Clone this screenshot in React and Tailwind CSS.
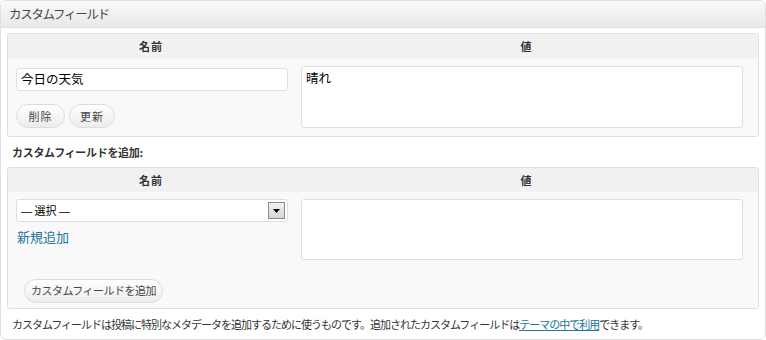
import React from 'react';

const jp = { fontFamily: '"Noto Sans CJK JP", "Liberation Sans", sans-serif' };

function Pill({ children, className = '' }) {
  return (
    <button
      className={`h-[24px] rounded-[12px] border border-[#dcdcdc] bg-gradient-to-b from-white to-[#ececec] text-[11px] tracking-[-0.5px] text-[#464646] leading-none ${className}`}
    >
      {children}
    </button>
  );
}

function HeadRow() {
  return (
    <div className="flex h-[24px] items-center bg-[#f1f1f1] text-[11px] font-bold text-[#333]">
      <div className="w-[286px] text-center tracking-[1px]">名前</div>
      <div className="flex-1 text-center">値</div>
    </div>
  );
}

export default function App() {
  return (
    <div className="w-[766px] h-[340px] bg-white" style={jp}>
      <div className="h-[340px] rounded-[6px] border border-[#dfdfdf] overflow-hidden">
        <div className="h-[27px] border-b border-[#dfdfdf] bg-gradient-to-b from-[#f9f9f9] to-[#e9e9e9] flex items-center pl-[8px] text-[12.5px] tracking-[-1.3px] text-[#464646]">
          カスタムフィールド
        </div>

        <div className="px-[6px] pt-[5px]">
          {/* existing field */}
          <div className="h-[104px] rounded-[3px] border border-[#dfdfdf] overflow-hidden">
            <HeadRow />
            <div className="flex h-[78px] bg-[#f9f9f9]">
              <div className="w-[286px] pl-[8px] pr-[6px] pt-[10px]">
                <div className="h-[23px] rounded-[3px] border border-[#dfdfdf] bg-white flex items-center pl-[4px] text-[12.5px] text-black">
                  今日の天気
                </div>
                <div className="mt-[13px] flex gap-[4px]">
                  <Pill className="w-[49px] tracking-[1px]">削除</Pill>
                  <Pill className="w-[46px] tracking-[1px]">更新</Pill>
                </div>
              </div>
              <div className="flex-1 pl-[7px] pr-[15px] pt-[8px]">
                <div className="h-[62px] rounded-[3px] border border-[#dfdfdf] bg-white px-[4px] pt-[2px] text-[12.5px] text-black">
                  晴れ
                </div>
              </div>
            </div>
          </div>

          <div className="h-[30px] flex items-center pl-[5px] text-[11px] font-bold tracking-[-0.3px] text-[#333]">
            カスタムフィールドを追加:
          </div>

          {/* new field */}
          <div className="h-[142px] rounded-[3px] border border-[#dfdfdf] overflow-hidden">
            <HeadRow />
            <div className="flex h-[116px] bg-[#f9f9f9]">
              <div className="w-[286px] pl-[8px] pr-[6px] pt-[7px]">
                <div className="h-[23px] rounded-[3px] border border-[#dfdfdf] bg-white flex items-center justify-between pl-[4px] pr-[2px] text-[11px] text-black">
                  <span>
                    <span className="font-['Liberation_Sans']">—</span> 選択 <span className="font-['Liberation_Sans']">—</span>
                  </span>
                  <span className="w-[17px] h-[17px] border border-[#8a8a8a] bg-gradient-to-b from-[#f2f2f2] to-[#d6d6d6] flex items-center justify-center">
                    <svg width="7" height="4" viewBox="0 0 7 4">
                      <path d="M0 0h7L3.5 4z" fill="#000" />
                    </svg>
                  </span>
                </div>
                <div className="mt-[6px] h-[18px] pl-[1px] text-[13px] leading-[18px] text-[#21759b]">新規追加</div>
                <div className="mt-[30px] pl-[8px]">
                  <Pill className="w-[139px]">カスタムフィールドを追加</Pill>
                </div>
              </div>
              <div className="flex-1 pl-[7px] pr-[15px] pt-[7px]">
                <div className="h-[61px] rounded-[3px] border border-[#dfdfdf] bg-white" />
              </div>
            </div>
          </div>

          <div className="h-[30px] flex items-center pl-[5px] text-[11px] tracking-[-1px] text-[#333]">
            カスタムフィールドは投稿に特別なメタデータを追加するために使うものです。追加されたカスタムフィールドは
            <a className="text-[#21759b] underline">テーマの中で利用</a>
            できます。
          </div>
        </div>
      </div>
    </div>
  );
}
